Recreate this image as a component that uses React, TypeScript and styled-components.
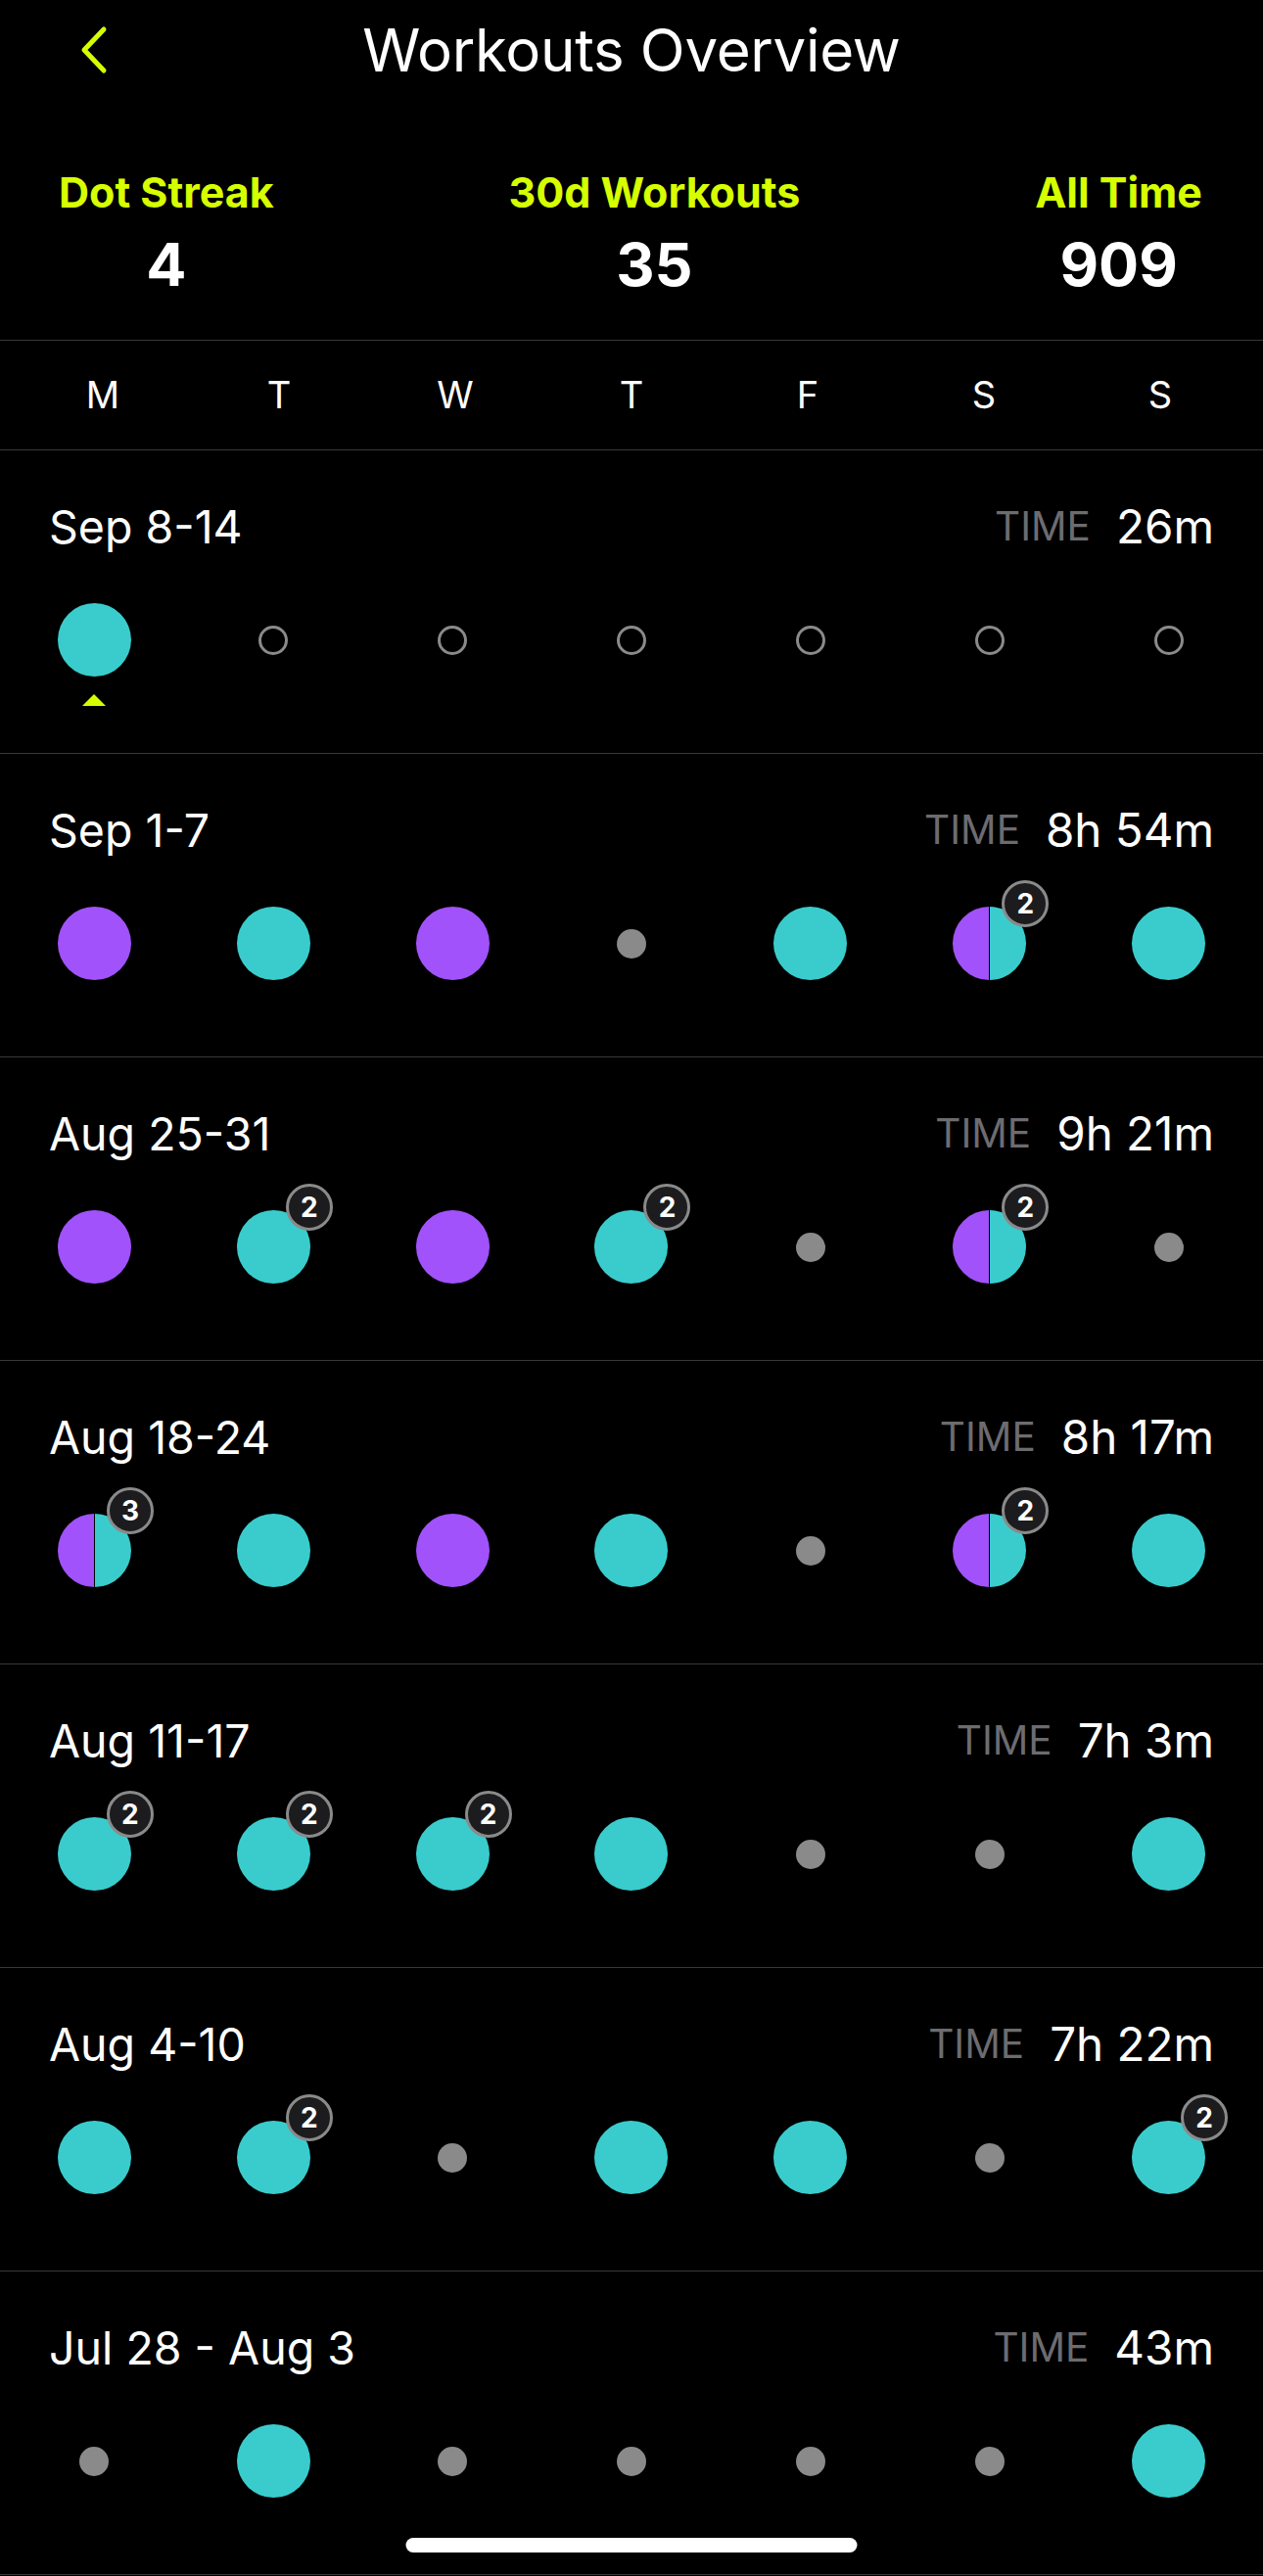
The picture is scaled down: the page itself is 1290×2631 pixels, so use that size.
import styled, { createGlobalStyle } from "styled-components";

const GlobalStyle = createGlobalStyle`
  html, body {
    margin: 0;
    padding: 0;
    background: #000;
  }
  * {
    box-sizing: border-box;
  }
`;

const LIME = "#d6ff00";
const TEAL = "#3acccc";
const PURPLE = "#a152fa";
const GREY = "#8a8a8a";
const LINE = "#38383a";

type DotKind = "teal" | "purple" | "split" | "rest" | "empty";

interface Day {
  kind: DotKind;
  count?: number;
  today?: boolean;
}

interface Week {
  label: string;
  time: string;
  days: Day[];
}

const t = (count?: number): Day => ({ kind: "teal", count });
const p = (count?: number): Day => ({ kind: "purple", count });
const s = (count?: number): Day => ({ kind: "split", count });
const r: Day = { kind: "rest" };
const e: Day = { kind: "empty" };

const weeks: Week[] = [
  { label: "Sep 8-14", time: "26m", days: [{ kind: "teal", today: true }, e, e, e, e, e, e] },
  { label: "Sep 1-7", time: "8h 54m", days: [p(), t(), p(), r, t(), s(2), t()] },
  { label: "Aug 25-31", time: "9h 21m", days: [p(), t(2), p(), t(2), r, s(2), r] },
  { label: "Aug 18-24", time: "8h 17m", days: [s(3), t(), p(), t(), r, s(2), t()] },
  { label: "Aug 11-17", time: "7h 3m", days: [t(2), t(2), t(2), t(), r, r, t()] },
  { label: "Aug 4-10", time: "7h 22m", days: [t(), t(2), r, t(), t(), r, t(2)] },
  { label: "Jul 28 - Aug 3", time: "43m", days: [r, t(), r, r, r, r, t()] },
];

const stats = [
  { label: "Dot Streak", value: "4" },
  { label: "30d Workouts", value: "35" },
  { label: "All Time", value: "909" },
];

const weekdays = ["M", "T", "W", "T", "F", "S", "S"];

const Screen = styled.div`
  position: relative;
  width: 1290px;
  min-height: 2631px;
  background: #000;
  color: #fff;
  font-family: Inter, "Liberation Sans", sans-serif;
  overflow: hidden;
`;

const Header = styled.header`
  display: grid;
  grid-template-columns: 1fr auto 1fr;
  align-items: center;
  height: 102px;
`;

const BackButton = styled.button`
  justify-self: start;
  display: flex;
  align-items: center;
  margin-left: 80px;
  padding: 0;
  background: none;
  border: none;
  cursor: pointer;
`;

const Title = styled.h1`
  margin: 0;
  font-size: 60px;
  font-weight: 400;
  line-height: 102px;
  letter-spacing: -0.3px;
`;

const StatsRow = styled.section`
  display: flex;
  justify-content: space-between;
  padding: 69px 62px 40px 60px;
  border-bottom: 1px solid ${LINE};
`;

const Stat = styled.div`
  display: flex;
  flex-direction: column;
  align-items: center;
  gap: 12px;
`;

const StatLabel = styled.div`
  color: ${LIME};
  font-size: 43px;
  font-weight: 700;
  line-height: 50px;
`;

const StatValue = styled.div`
  font-size: 61px;
  font-weight: 700;
  line-height: 74px;
`;

const WeekdayRow = styled.div`
  display: grid;
  grid-template-columns: repeat(7, 1fr);
  padding: 0 15px;
  border-bottom: 1px solid ${LINE};
`;

const Weekday = styled.div`
  text-align: center;
  font-size: 38px;
  line-height: 111px;
`;

const WeekRow = styled.section`
  display: flex;
  flex-direction: column;
  gap: 53px;
  padding: 53px 0 78px;
  border-bottom: 1px solid ${LINE};
`;

const WeekHead = styled.div`
  display: flex;
  justify-content: space-between;
  align-items: center;
  height: 50px;
  padding: 0 50px;
`;

const WeekLabel = styled.div`
  font-size: 46.5px;
  line-height: 50px;
`;

const TimeBox = styled.div`
  display: flex;
  align-items: center;
  gap: 26px;
`;

const TimeTag = styled.span`
  color: #6c6c70;
  font-size: 40.5px;
  line-height: 50px;
`;

const TimeValue = styled.span`
  font-size: 47.5px;
  line-height: 50px;
`;

const DotRow = styled.div`
  display: grid;
  grid-template-columns: repeat(7, 1fr);
  padding: 0 5px;
  height: 75px;
`;

const DotCell = styled.div`
  display: flex;
  align-items: center;
  justify-content: center;
`;

const DotWrap = styled.div`
  position: relative;
  width: 75px;
  height: 75px;
  display: flex;
  align-items: center;
  justify-content: center;
`;

const dotFill: Record<DotKind, string> = {
  teal: TEAL,
  purple: PURPLE,
  split: `linear-gradient(to right, ${PURPLE} 0 49%, #000 49% 51%, ${TEAL} 51% 100%)`,
  rest: GREY,
  empty: "transparent",
};

const Dot = styled.div<{ $kind: DotKind }>`
  border-radius: 50%;
  width: ${({ $kind }) => ($kind === "rest" || $kind === "empty" ? "30px" : "75px")};
  height: ${({ $kind }) => ($kind === "rest" || $kind === "empty" ? "30px" : "75px")};
  background: ${({ $kind }) => dotFill[$kind]};
  border: ${({ $kind }) => ($kind === "empty" ? `3px solid ${GREY}` : "none")};
`;

const Badge = styled.div`
  position: absolute;
  left: 50px;
  top: -27px;
  width: 48px;
  height: 48px;
  border-radius: 50%;
  background: #1c1c1e;
  border: 3px solid ${GREY};
  display: flex;
  align-items: center;
  justify-content: center;
  font-size: 28px;
  font-weight: 700;
  color: #fff;
`;

const TodayMark = styled.div`
  position: absolute;
  left: 50%;
  top: 93px;
  transform: translateX(-50%);
  width: 0;
  height: 0;
  border-left: 12px solid transparent;
  border-right: 12px solid transparent;
  border-bottom: 12px solid ${LIME};
`;

const HomeIndicator = styled.div`
  position: absolute;
  left: 50%;
  bottom: 24px;
  transform: translateX(-50%);
  width: 461px;
  height: 15px;
  border-radius: 8px;
  background: #fff;
`;

const Chevron = () => (
  <svg width="30" height="50" viewBox="0 0 30 50" fill="none">
    <polyline
      points="26,4 6,25 26,46"
      stroke={LIME}
      strokeWidth="5"
      strokeLinecap="round"
      strokeLinejoin="round"
    />
  </svg>
);

const App = () => {
  return (
    <Screen>
      <GlobalStyle />
      <Header>
        <BackButton aria-label="Back">
          <Chevron />
        </BackButton>
        <Title>Workouts Overview</Title>
        <div />
      </Header>

      <StatsRow>
        {stats.map((st) => (
          <Stat key={st.label}>
            <StatLabel>{st.label}</StatLabel>
            <StatValue>{st.value}</StatValue>
          </Stat>
        ))}
      </StatsRow>

      <WeekdayRow>
        {weekdays.map((d, i) => (
          <Weekday key={i}>{d}</Weekday>
        ))}
      </WeekdayRow>

      {weeks.map((w) => (
        <WeekRow key={w.label}>
          <WeekHead>
            <WeekLabel>{w.label}</WeekLabel>
            <TimeBox>
              <TimeTag>TIME</TimeTag>
              <TimeValue>{w.time}</TimeValue>
            </TimeBox>
          </WeekHead>
          <DotRow>
            {w.days.map((d, i) => (
              <DotCell key={i}>
                <DotWrap>
                  <Dot $kind={d.kind} />
                  {d.count && <Badge>{d.count}</Badge>}
                  {d.today && <TodayMark />}
                </DotWrap>
              </DotCell>
            ))}
          </DotRow>
        </WeekRow>
      ))}

      <HomeIndicator />
    </Screen>
  );
};

export default App;
